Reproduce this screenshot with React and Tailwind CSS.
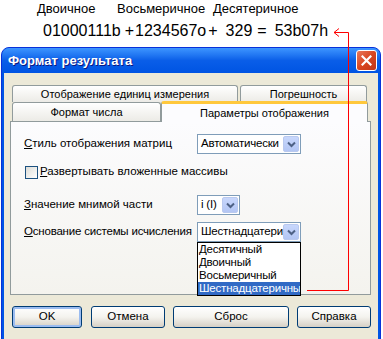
import React from "react";

const tabBase =
  "h-full flex items-center justify-center border border-b-0 border-[#919b9c] rounded-t-[3px] bg-gradient-to-b from-white to-[#ecebe6]";

function Chevron() {
  return (
    <svg width="9" height="7" viewBox="0 0 9 7">
      <path d="M1 1.5 L4.5 5 L8 1.5" fill="none" stroke="#4d6185" strokeWidth="2" />
    </svg>
  );
}

function Combo({ value, width }) {
  return (
    <div className={`flex items-center h-[20px] border border-[#7f9db9] bg-white ${width}`}>
      <span className="flex-1 pl-[3px] text-[11.5px] tracking-[-0.2px] leading-none whitespace-nowrap overflow-hidden">{value}</span>
      <div className="w-[16px] h-[16px] mr-[1px] shrink-0 rounded-[2px] border border-[#b9c9ef] bg-gradient-to-b from-[#c8d7fc] to-[#b3c6f4] flex items-center justify-center">
        <Chevron />
      </div>
    </div>
  );
}

function Btn({ label, width, def }) {
  return (
    <div
      className={`h-[22px] ${width} rounded-[3px] border border-[#003c74] bg-gradient-to-b from-white via-[#f4f3ee] to-[#d6d0c5] flex items-center justify-center ${
        def ? "shadow-[inset_0_0_0_2px_#9bbcf0]" : ""
      }`}
    >
      {label}
    </div>
  );
}

export default function App() {
  return (
    <div className="relative w-[383px] h-[339px] overflow-hidden bg-white text-black font-['Liberation_Sans',Arial,sans-serif]">
      {/* captions */}
      <div className="flex pt-[1px] pl-[37px] text-[13px] leading-[15px]">
        <span className="w-[80px]">Двоичное</span>
        <span className="w-[96px]">Восьмеричное</span>
        <span>Десятеричное</span>
      </div>
      <div className="flex mt-[6px] pl-[43px] text-[16px] leading-[18px] whitespace-nowrap">
        <span>01000111b</span>
        <span className="ml-[4px]">+</span>
        <span className="ml-[1px]">1234567o</span>
        <span className="ml-[2px]">+</span>
        <span className="ml-[8px]">329</span>
        <span className="ml-[5px]">=</span>
        <span className="ml-[8px]">53b07h</span>
      </div>

      {/* window */}
      <div className="mt-[7px] ml-[1px] w-[380px] h-[300px] rounded-t-[8px] bg-[#0055e5] border border-[#0831d9] flex flex-col">
        <div className="h-[25px] shrink-0 rounded-t-[7px] bg-gradient-to-b from-[#3d95ff] via-[#0a5ee8] to-[#0054e3] flex items-center pl-[6px] pr-[3px]">
          <span className="flex-1 text-white font-bold text-[13px] [text-shadow:1px_1px_0_#0a1883]">
            Формат результата
          </span>
          <div className="w-[21px] h-[21px] rounded-[3px] border border-white bg-gradient-to-br from-[#e8775a] via-[#d9461f] to-[#c1361a] flex items-center justify-center">
            <svg width="11" height="11" viewBox="0 0 11 11">
              <path d="M1.5 1.5 L9.5 9.5 M9.5 1.5 L1.5 9.5" stroke="white" strokeWidth="2.2" strokeLinecap="square" />
            </svg>
          </div>
        </div>

        <div className="flex-1 mx-[2px] bg-[#ece9d8] pt-[12px] pl-[6px] pr-[7px] text-[11px]">
          {/* tabs */}
          <div className="h-[17px] flex pl-[2px]">
            <div className={`${tabBase} w-[226px]`}>Отображение единиц измерения</div>
            <div className={`${tabBase} w-[127px] ml-[2px]`}>Погрешность</div>
          </div>
          <div className="h-[19px] flex items-end pl-[2px]">
            <div className={`${tabBase} w-[149px] !h-[19px]`}>Формат числа</div>
            <div className="relative -mb-px z-10 h-[21px] w-[207px] bg-[#fcfcfe] border border-b-0 border-[#919b9c] border-t-[3px] border-t-[#ffc83c] rounded-t-[3px] flex items-center justify-center">
              Параметры отображения
            </div>
          </div>

          {/* panel */}
          <div className="relative h-[174px] border border-[#919b9c] bg-gradient-to-b from-[#fcfcfe] to-[#f4f3ee] pl-[13px] pt-[12px] text-[11.5px]">
            <div className="flex items-center h-[20px]">
              <span className="w-[173px] whitespace-nowrap"><u>С</u>тиль отображения матриц</span>
              <Combo value="Автоматически" width="w-[104px]" />
            </div>
            <div className="flex items-center mt-[11px] ml-[1px] h-[14px]">
              <div className="w-[13px] h-[13px] border border-[#1c5180] bg-gradient-to-br from-[#dcdcd7] to-white" />
              <span className="ml-[2px] whitespace-nowrap"><u>Р</u>азвертывать вложенные массивы</span>
            </div>
            <div className="flex items-center mt-[16px] h-[20px]">
              <span className="w-[173px] whitespace-nowrap"><u>З</u>начение мнимой части</span>
              <Combo value="i (I)" width="w-[43px]" />
            </div>
            <div className="flex items-center mt-[7px] h-[20px]">
              <span className="w-[173px] whitespace-nowrap tracking-[-0.2px]"><u>О</u>снование системы исчисления</span>
              <Combo value="Шестнадцатери" width="w-[104px]" />
            </div>
            <div className="absolute left-[186px] top-[120px] w-[104px] border border-black bg-white leading-[13px] tracking-[-0.2px] z-20">
              <div className="pl-[1px]">Десятичный</div>
              <div className="pl-[1px]">Двоичный</div>
              <div className="pl-[1px]">Восьмеричный</div>
              <div className="pl-[1px] bg-[#316ac5] text-white whitespace-nowrap overflow-hidden">Шестнадцатеричны</div>
            </div>
          </div>

          {/* buttons */}
          <div className="flex mt-[11px] pl-[2px] text-[11.5px]">
            <Btn label="OK" width="w-[71px]" def />
            <div className="ml-[9px]"><Btn label="Отмена" width="w-[74px]" /></div>
            <div className="ml-[8px]"><Btn label="Сброс" width="w-[116px]" /></div>
            <div className="ml-[8px]"><Btn label="Справка" width="w-[74px]" /></div>
          </div>
        </div>
      </div>

      {/* red pointer */}
      <svg className="absolute left-0 top-0 pointer-events-none z-30" width="383" height="339">
        <path d="M307 290.5 H348.5 V32.5 H334" fill="none" stroke="#ff0000" strokeWidth="1" />
        <path d="M339 28.5 L334 32.5 L339 36.5" fill="none" stroke="#ff0000" strokeWidth="1" />
      </svg>
    </div>
  );
}
